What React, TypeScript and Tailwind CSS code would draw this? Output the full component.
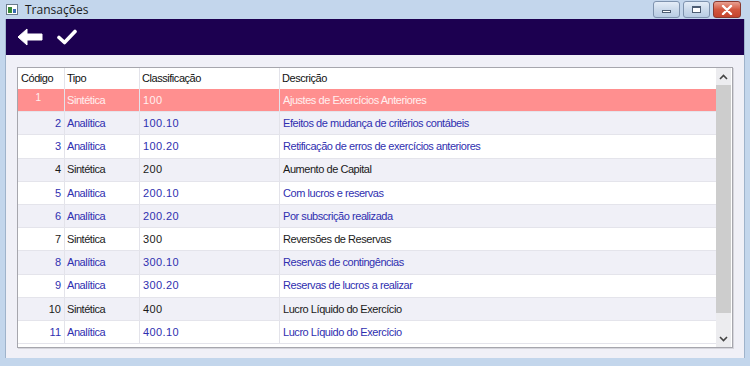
import React from "react";

type Row = { code: number; tipo: string; cls: string; desc: string };

const rows: Row[] = [
    { code: 1, tipo: "Sintética", cls: "100", desc: "Ajustes de Exercícios Anteriores" },
    { code: 2, tipo: "Analítica", cls: "100.10", desc: "Efeitos de mudança de critérios contábeis" },
    { code: 3, tipo: "Analítica", cls: "100.20", desc: "Retificação de erros de exercícios anteriores" },
    { code: 4, tipo: "Sintética", cls: "200", desc: "Aumento de Capital" },
    { code: 5, tipo: "Analítica", cls: "200.10", desc: "Com lucros e reservas" },
    { code: 6, tipo: "Analítica", cls: "200.20", desc: "Por subscrição realizada" },
    { code: 7, tipo: "Sintética", cls: "300", desc: "Reversões de Reservas" },
    { code: 8, tipo: "Analítica", cls: "300.10", desc: "Reservas de contingências" },
    { code: 9, tipo: "Analítica", cls: "300.20", desc: "Reservas de lucros a realizar" },
    { code: 10, tipo: "Sintética", cls: "400", desc: "Lucro Líquido do Exercício" },
    { code: 11, tipo: "Analítica", cls: "400.10", desc: "Lucro Líquido do Exercício" },
];

function WinButton({ kind }: { kind: "min" | "max" | "close" }) {
    if (kind === "close") {
        return (
            <div className="w-[28px] h-[17px] rounded-[3px] border border-[#8a3a30] bg-gradient-to-b from-[#e8a091] via-[#d2573f] to-[#c5442d] flex items-center justify-center">
                <svg width="12" height="10" viewBox="0 0 12 10">
                    <path d="M2 1 L10 9 M10 1 L2 9" stroke="#fff" strokeWidth="2.4" strokeLinecap="round" />
                </svg>
            </div>
        );
    }
    return (
        <div className="w-[27px] h-[17px] rounded-[3px] border border-[#7e93ae] bg-gradient-to-b from-[#e4edf7] via-[#cbdaeb] to-[#b9cde4] flex items-center justify-center">
            {kind === "min" ? (
                <div className="w-[9px] h-[3px] mt-[3px] bg-white border border-[#4d5d73]" />
            ) : (
                <div className="w-[9px] h-[7px] bg-white border border-[#4d5d73] border-t-2" />
            )}
        </div>
    );
}

export default function App() {
    return (
        <div
            className="w-[750px] h-[366px] bg-[#c3d6ec] flex flex-col overflow-hidden"
            style={{ fontFamily: "'Liberation Sans', Arial, sans-serif" }}
        >
            {/* title bar */}
            <div className="h-[19px] flex items-center pl-[6px] pr-[9px] shrink-0">
                <div className="w-[12px] h-[11px] border border-[#6b7b8c] bg-white flex items-end p-[1px] gap-[1px]">
                    <div className="w-[4px] h-[6px] bg-[#3a8a3a]" />
                    <div className="w-[3px] h-[4px] bg-[#3b6bb5]" />
                </div>
                <span
                    className="ml-[7px] text-[12px] text-[#1b1b1b]"
                    style={{ fontFamily: "'Open Sans', sans-serif" }}
                >
                    Transações
                </span>
                <div className="ml-auto flex gap-[3px] self-start mt-[1px]">
                    <WinButton kind="min" />
                    <WinButton kind="max" />
                    <WinButton kind="close" />
                </div>
            </div>

            <div className="flex-1 mx-[5px] mb-[8px] flex flex-col border-x border-[#9fb3cb] bg-[#f0f0f7]">
                {/* toolbar */}
                <div className="h-[36px] bg-[#1c0050] flex items-center pl-[11px] gap-[14px] shrink-0">
                    <svg width="26" height="18" viewBox="0 0 26 18">
                        <path d="M1 9 L10 1 L10 6 L25 6 L25 12 L10 12 L10 17 Z" fill="#fff" stroke="#fff" strokeWidth="1" strokeLinejoin="round" />
                    </svg>
                    <svg width="20" height="16" viewBox="0 0 20 16">
                        <path d="M2 8.5 L7.5 13.5 L18 2.5" fill="none" stroke="#fff" strokeWidth="3.6" strokeLinecap="round" strokeLinejoin="round" />
                    </svg>
                </div>

                {/* grid */}
                <div className="mt-[12px] ml-[11px] mr-[11px] h-[281px] border border-[#a6a6ad] shadow-[1px_1px_0_#d5d5dc] bg-white flex text-[11px] tracking-[-0.45px]">
                    <div className="flex-1 flex flex-col">
                        <div className="h-[21px] flex items-center text-[#111] shrink-0">
                            <div className="w-[47px] pl-[3px] h-full flex items-center border-r border-[#e3e3ea]">Código</div>
                            <div className="w-[75px] pl-[2px] h-full flex items-center border-r border-[#e3e3ea]">Tipo</div>
                            <div className="w-[140px] pl-[2px] h-full flex items-center border-r border-[#e3e3ea]">Classificação</div>
                            <div className="flex-1 pl-[2px] h-full flex items-center">Descrição</div>
                        </div>
                        {rows.map((r, i) => {
                            const sel = i === 0;
                            const blue = r.tipo === "Analítica";
                            const bg = sel ? "bg-[#ff8f8f]" : i % 2 === 1 ? "bg-[#f0f0f7]" : "bg-white";
                            const color = sel ? "text-[#fff0f0]" : blue ? "text-[#2f2fb0]" : "text-[#1a1a1a]";
                            return (
                                <div key={r.code} className={`h-[23.2px] flex shrink-0 border-b border-[#e4e4eb] ${bg} ${color}`}>
                                    {sel ? (
                                        <div className="w-[47px] h-full flex justify-center pt-[1px] pr-[6px] text-[10px] border-r border-[#e3e3ea]">
                                            {r.code}
                                        </div>
                                    ) : (
                                        <div className="w-[47px] h-full flex items-center justify-end pr-[3px] border-r border-[#e3e3ea] tracking-normal">
                                            {r.code}
                                        </div>
                                    )}
                                    <div className="w-[75px] h-full flex items-center pl-[2px] border-r border-[#e3e3ea]">{r.tipo}</div>
                                    <div className="w-[140px] h-full flex items-center pl-[3px] border-r border-[#e3e3ea] tracking-[0.4px]">{r.cls}</div>
                                    <div className="flex-1 h-full flex items-center pl-[3px]">{r.desc}</div>
                                </div>
                            );
                        })}
                    </div>
                    {/* scrollbar */}
                    <div className="w-[15px] mr-[1px] bg-[#ececef] flex flex-col">
                        <div className="h-[17px] flex items-center justify-center">
                            <svg width="9" height="6" viewBox="0 0 9 6">
                                <path d="M1 5 L4.5 1.5 L8 5" fill="none" stroke="#444" strokeWidth="1.6" />
                            </svg>
                        </div>
                        <div className="h-[228px] bg-[#cdcdcd]" />
                        <div className="flex-1 flex items-end justify-center pb-[5px]">
                            <svg width="9" height="6" viewBox="0 0 9 6">
                                <path d="M1 1 L4.5 4.5 L8 1" fill="none" stroke="#444" strokeWidth="1.6" />
                            </svg>
                        </div>
                    </div>
                </div>
            </div>
        </div>
    );
}
